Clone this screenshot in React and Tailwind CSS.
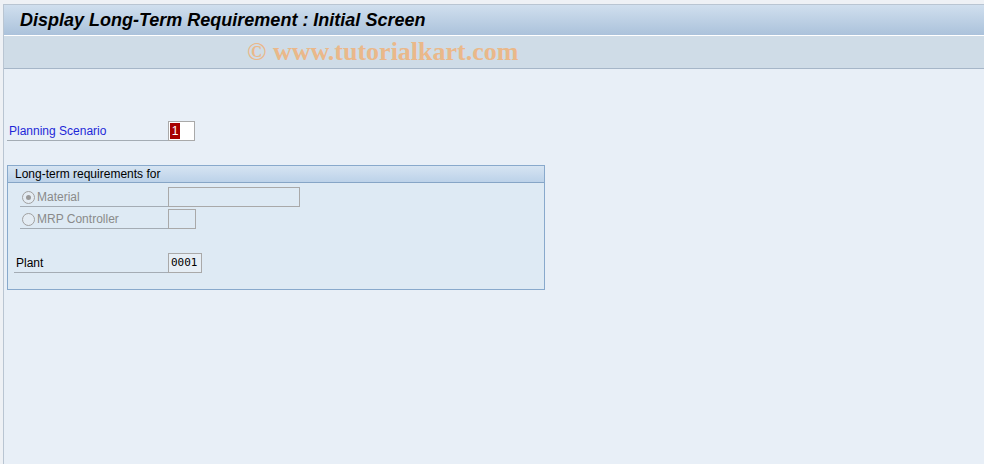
import React from 'react'

const Field = ({ className = '', children }) => (
  <div className={`h-[20px] border border-[#a9a9a9] ${className}`}>{children}</div>
)

const Radio = ({ checked }) => (
  <span className="flex h-[13px] w-[13px] items-center justify-center rounded-full border border-[#a0a0a0] bg-[#e4ecf3]">
    {checked && <span className="h-[5px] w-[5px] rounded-full bg-[#9a9a9a]" />}
  </span>
)

export default function App() {
  return (
    <div className="flex h-[464px] w-[984px] flex-col bg-[#eef1f5] pt-[4px] pl-[3px] font-['Liberation_Sans',sans-serif] text-[12px]">
      <div className="flex flex-1 flex-col border-l border-t border-[#b9c5d2]">
        <div className="flex h-[31px] items-center border-b border-white bg-gradient-to-b from-[#d0dfee] to-[#abc2db] pl-[16px]">
          <h1 className="text-[18px] font-bold italic text-black">Display Long-Term Requirement : Initial Screen</h1>
        </div>
        <div className="flex h-[33px] items-center border-b border-[#a6b6c8] bg-[#cfdce7] pl-[243px]">
          <span className="-mt-[2px] font-['Liberation_Serif',serif] text-[26px] font-bold text-[#eab88a]">© www.tutorialkart.com</span>
        </div>
        <div className="flex-1 bg-[#e8eff7] pl-[3px] pt-[52px]">
          <div className="flex items-end">
            <div className="w-[161px] border-b border-[#a4acb4] pl-[2px] text-[#1e28d8]">Planning Scenario</div>
            <Field className="flex w-[27px] bg-white p-px">
              <span className="flex h-full w-[10px] items-center justify-center bg-[#a80000] text-white">1</span>
            </Field>
          </div>

          <div className="mt-[24px] w-[538px] border border-[#88a9cc] bg-[#deeaf4]">
            <div className="flex h-[17px] items-center border-b border-[#86a5c6] bg-gradient-to-b from-[#d6e4f2] to-[#bcd2e9] pl-[7px] text-black">
              Long-term requirements for
            </div>
            <div className="pt-[4px]">
              <div className="flex items-end">
                <div className="ml-[12px] flex w-[148px] items-center gap-[2px] border-b border-[#a4acb4] pl-[2px] text-[#8a8a8a]">
                  <Radio checked />
                  <span>Material</span>
                </div>
                <Field className="w-[132px]" />
              </div>
              <div className="mt-[2px] flex items-end">
                <div className="ml-[12px] flex w-[148px] items-center gap-[2px] border-b border-[#a4acb4] pl-[2px] text-[#8a8a8a]">
                  <Radio />
                  <span>MRP Controller</span>
                </div>
                <Field className="w-[28px]" />
              </div>
              <div className="mt-[24px] flex items-end">
                <div className="ml-[6px] w-[154px] border-b border-[#a4acb4] pl-[2px] text-black">Plant</div>
                <Field className="flex w-[34px] items-center bg-[#e6eef5] pl-[2px] font-['DejaVu_Sans_Mono',monospace] text-[11px] text-black">
                  0001
                </Field>
              </div>
            </div>
            <div className="h-[16px]" />
          </div>
        </div>
      </div>
    </div>
  )
}
